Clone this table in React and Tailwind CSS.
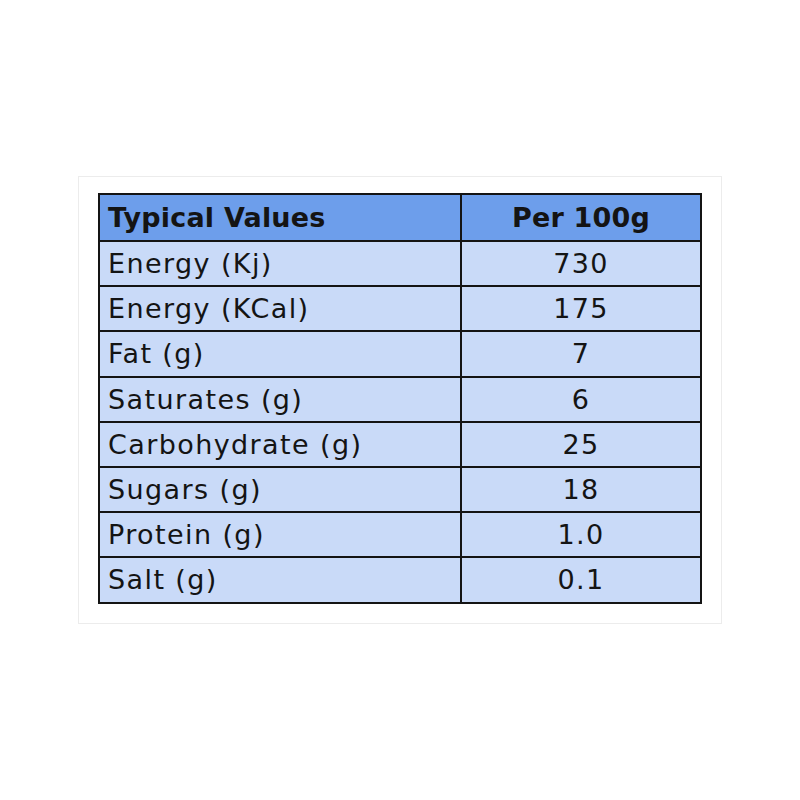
const rows = [
  ["Energy (Kj)", "730"],
  ["Energy (KCal)", "175"],
  ["Fat (g)", "7"],
  ["Saturates (g)", "6"],
  ["Carbohydrate (g)", "25"],
  ["Sugars (g)", "18"],
  ["Protein (g)", "1.0"],
  ["Salt (g)", "0.1"],
];

export default function App() {
  return (
    <div className="w-[800px] h-[800px] bg-white pt-[176px] pl-[78px] font-['DejaVu_Sans',sans-serif]">
      <div className="w-[644px] h-[448px] border border-[#ececec] pt-[16px] pl-[19px]">
        <table className="w-[604px] border-collapse border-2 border-[#141414] text-[#141414]">
          <thead>
            <tr className="bg-[#6d9eeb] h-[47px]">
              <th className="w-[362px] border-2 border-[#141414] text-left pl-[8px] text-[27px] leading-none font-bold tracking-[0.2px]">
                Typical Values
              </th>
              <th className="border-2 border-[#141414] text-center text-[27px] leading-none font-bold tracking-[0.2px]">
                Per 100g
              </th>
            </tr>
          </thead>
          <tbody>
            {rows.map(([label, value]) => (
              <tr key={label} className="bg-[#c9daf8] h-[45.2px]">
                <td className="border-2 border-[#141414] pl-[8px] text-[27px] leading-none tracking-[1.4px]">{label}</td>
                <td className="border-2 border-[#141414] text-center text-[27px] leading-none tracking-[1.4px]">{value}</td>
              </tr>
            ))}
          </tbody>
        </table>
      </div>
    </div>
  );
}
